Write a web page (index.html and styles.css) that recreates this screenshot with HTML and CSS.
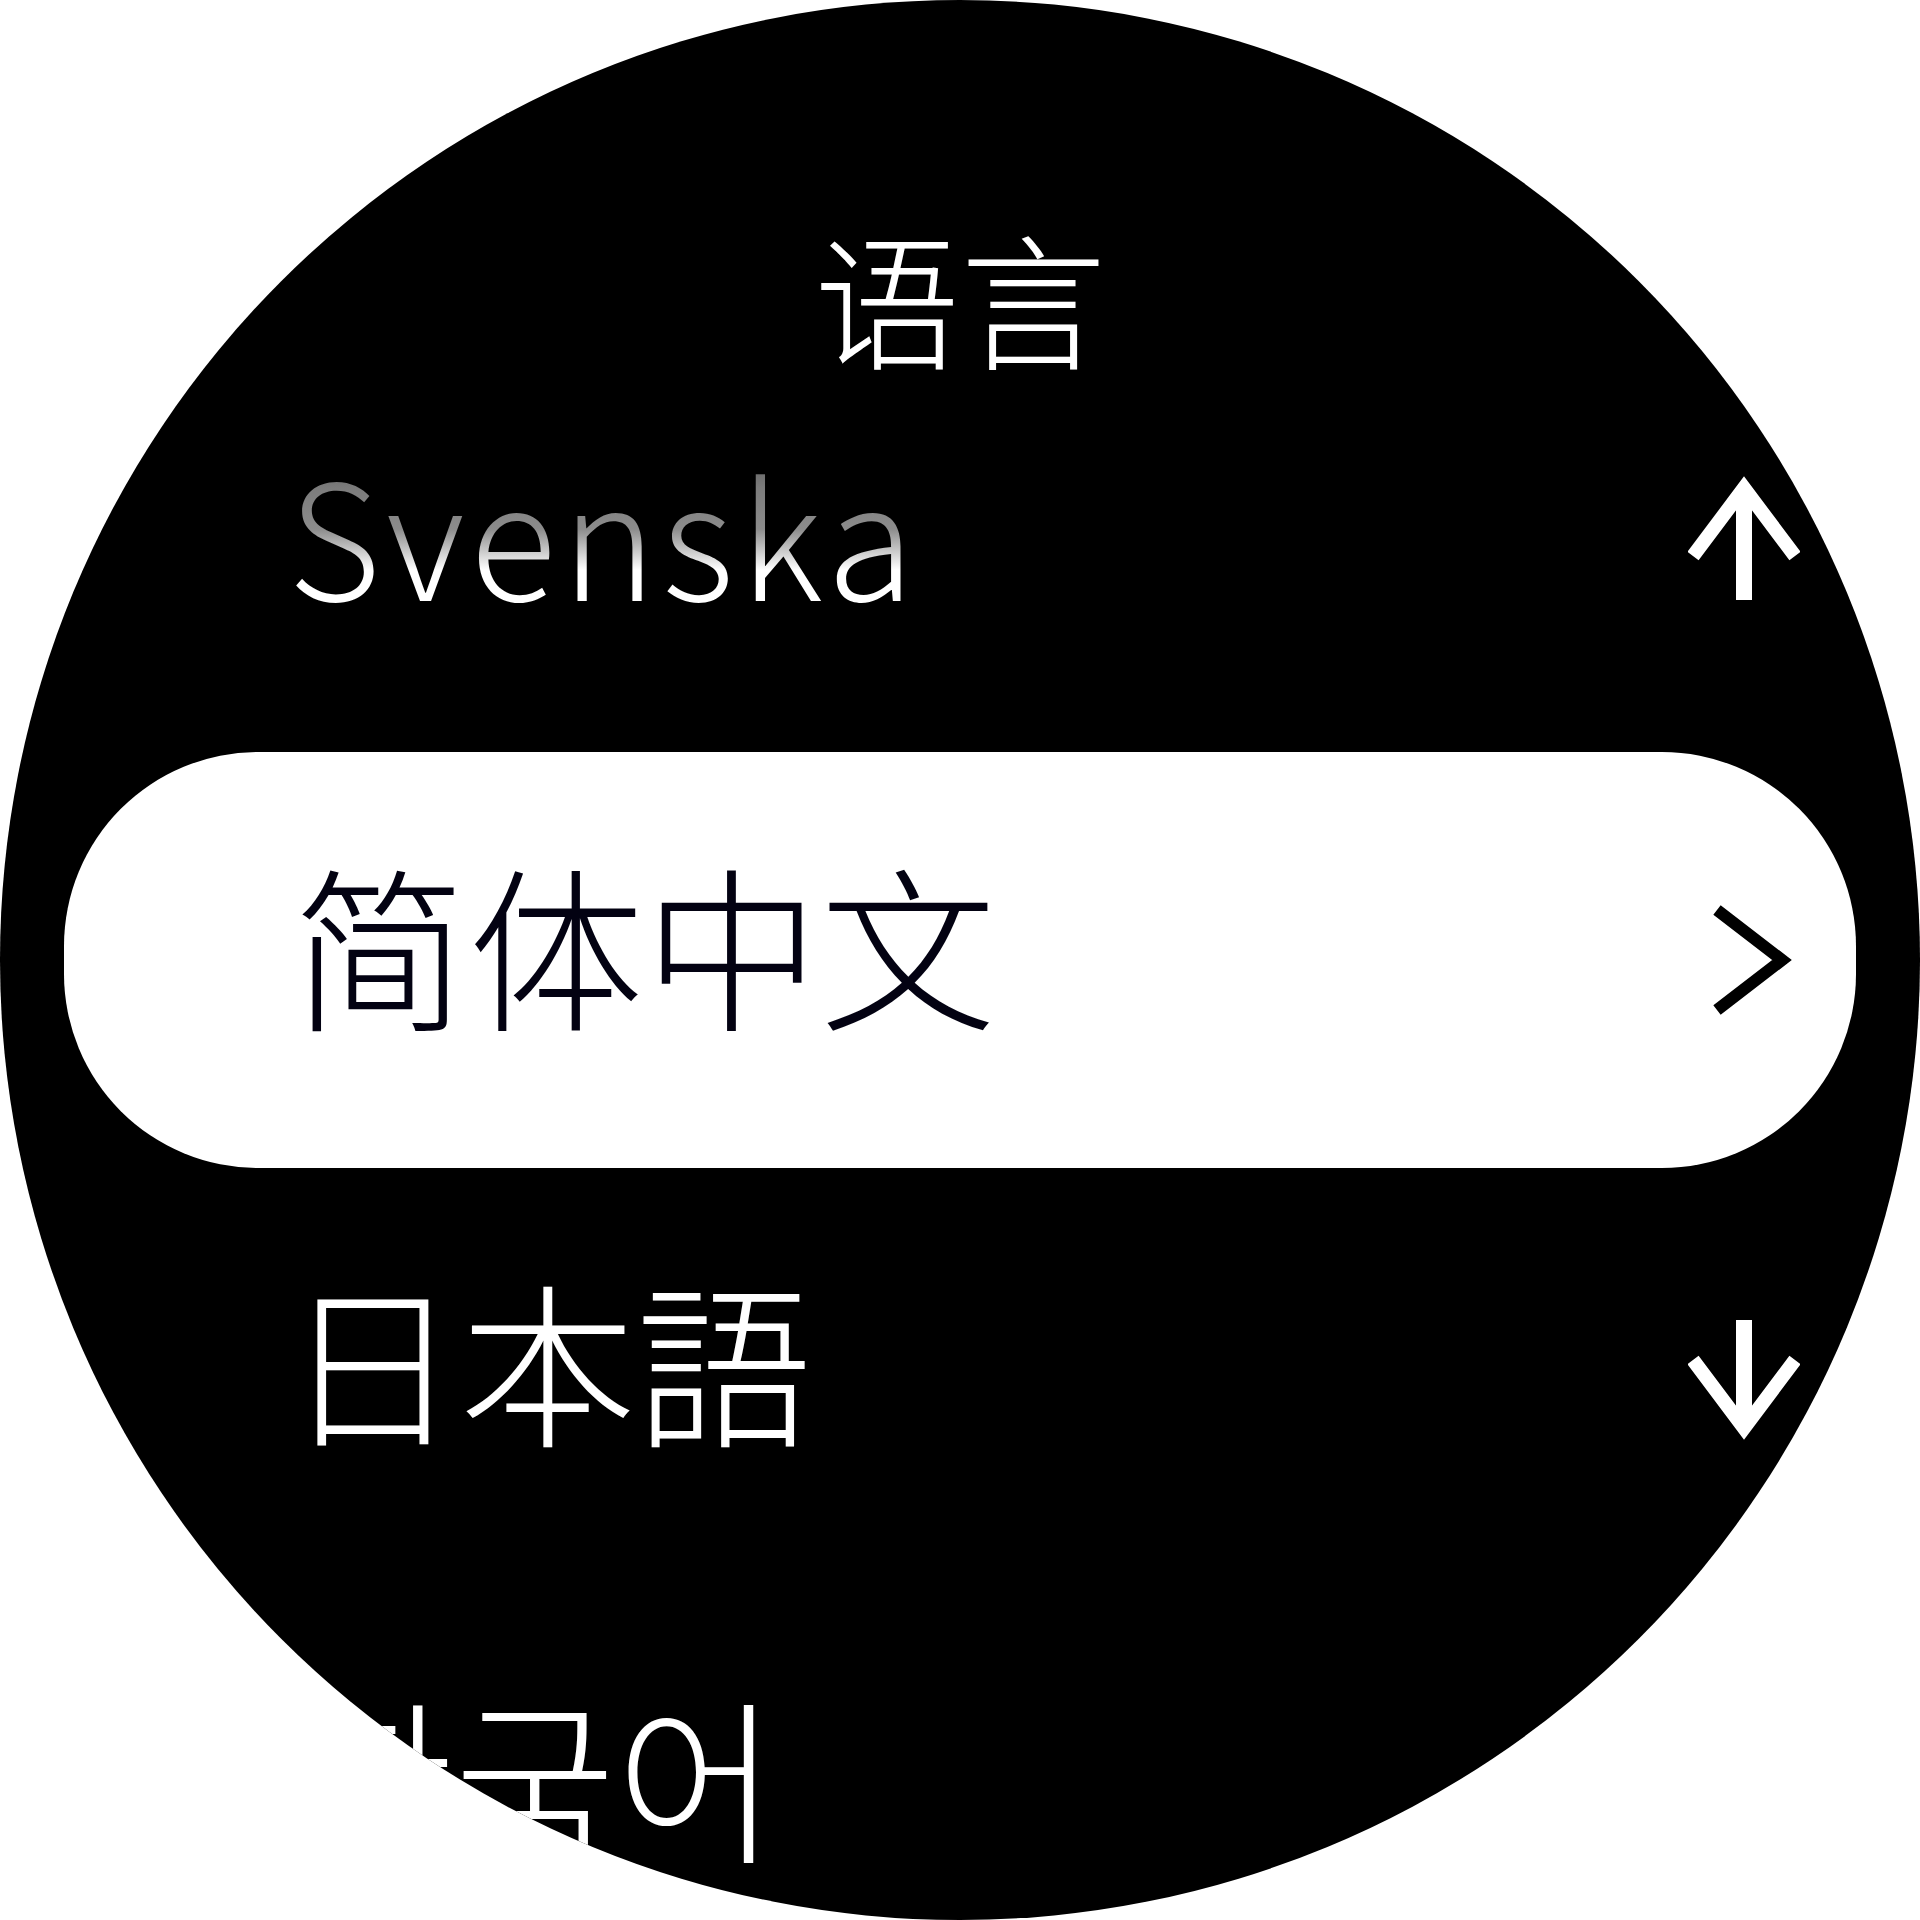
FILE: index.html
```html
<!DOCTYPE html>
<html lang="zh-CN">
<head>
<meta charset="utf-8">
<title>语言</title>
<link rel="stylesheet" href="styles.css">
</head>
<body>
<div class="watch">
  <header class="header">
    <h1 class="title">语言</h1>
  </header>
  <ul class="list">
    <li class="row">
      <span class="label label-faded" lang="sv">Svenska</span>
      <svg class="icon arrow arrow-up" viewBox="0 0 112 128" width="112" height="128" aria-hidden="true">
        <path d="M56 20V128" stroke="#fff" stroke-width="16" fill="none"/>
        <path d="M5 84L56 16L107 84" stroke="#fff" stroke-width="14" fill="none" stroke-linejoin="miter"/>
      </svg>
    </li>
    <li class="row row-selected">
      <span class="label" lang="zh-CN">简体中文</span>
      <svg class="icon chevron" viewBox="0 0 80 112" width="80" height="112" aria-hidden="true">
        <path d="M5 6L70 56L5 106" stroke="#000" stroke-width="12" fill="none" stroke-linejoin="miter"/>
      </svg>
    </li>
    <li class="row">
      <span class="label label-ja" lang="ja">日本語</span>
      <svg class="icon arrow arrow-down" viewBox="0 0 112 128" width="112" height="128" aria-hidden="true">
        <path d="M56 0V104" stroke="#fff" stroke-width="16" fill="none"/>
        <path d="M5 40L56 108L107 40" stroke="#fff" stroke-width="14" fill="none" stroke-linejoin="miter"/>
      </svg>
    </li>
    <li class="row">
      <span class="label label-ko" lang="ko">한국어</span>
    </li>
  </ul>
</div>
</body>
</html>
```

FILE: styles.css
```css
html, body {
  margin: 0;
  padding: 0;
  background: #ffffff;
}

body {
  width: 1920px;
  height: 1920px;
  font-family: "Noto Sans CJK SC", "Noto Sans", sans-serif;
}

.watch {
  width: 1920px;
  height: 1920px;
  border-radius: 50%;
  background: #000000;
  overflow: hidden;
  display: flex;
  flex-direction: column;
}

.header {
  box-sizing: border-box;
  height: 336px;
  flex: 0 0 336px;
  padding-top: 222px;
  display: flex;
  justify-content: center;
}

.title {
  margin: 0;
  font-size: 146px;
  line-height: 1;
  font-weight: 300;
  color: #ffffff;
  font-family: "Noto Sans CJK SC", sans-serif;
  height: 146px;
}

.list {
  list-style: none;
  margin: 0;
  padding: 0;
  display: flex;
  flex-direction: column;
}

.row {
  box-sizing: border-box;
  height: 416px;
  flex: 0 0 416px;
  margin: 0 64px;
  padding: 0 56px 0 232px;
  border-radius: 194px;
  display: flex;
  align-items: center;
  color: #ffffff;
}

.row-selected {
  background: #ffffff;
  color: #030212;
}

.label {
  flex: 1;
  font-size: 176px;
  line-height: 1;
  font-weight: 300;
  padding-bottom: 36px;
  margin-left: -4px;
  white-space: nowrap;
}

.label-faded {
  display: block;
  font-size: 160px;
  letter-spacing: 5.5px;
  padding-bottom: 26px;
  margin-left: -8px;
  color: transparent;
  background: linear-gradient(to bottom, #5a5a5a 0%, #7c7c7c 20%, #8c8c8c 42%, #ffffff 64%, #ffffff 100%);
  -webkit-background-clip: text;
  background-clip: text;
}

.label-ja {
  font-family: "Noto Sans CJK JP", sans-serif;
  margin-left: -12px;
}

.label-ko {
  font-family: "Noto Sans CJK KR", sans-serif;
}

.icon {
  flex: 0 0 auto;
  display: block;
}

.arrow-up {
  margin-bottom: 16px;
}

.arrow-down {
  margin-top: 16px;
}

.chevron {
  margin-right: 8px;
}
```
